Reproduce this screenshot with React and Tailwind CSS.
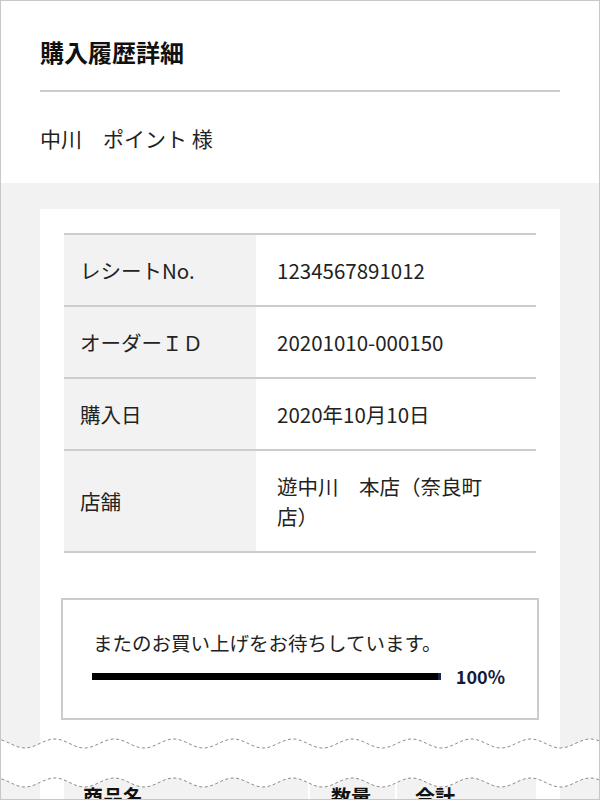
const rows = [
  { label: 'レシートNo.', value: '1234567891012' },
  { label: 'オーダーＩＤ', value: '20201010-000150' },
  { label: '購入日', value: '2020年10月10日' },
  { label: '店舗', value: '遊中川　本店（奈良町店）' },
];

// dashed "torn" band between two sine waves
function wavePoints(y0) {
  const pts = [];
  for (let x = -4; x <= 604; x += 2) {
    const y = y0 + 4.5 * Math.cos((2 * Math.PI * (x - 25)) / 59.5);
    pts.push([x, +y.toFixed(2)]);
  }
  return pts;
}

function FoldBand() {
  const top = wavePoints(13.5);
  const bottom = wavePoints(52.5);
  const line = (pts) => pts.map(([x, y], i) => `${i ? 'L' : 'M'}${x} ${y}`).join(' ');
  const fill =
    line(top) +
    ' ' +
    bottom
      .slice()
      .reverse()
      .map(([x, y]) => `L${x} ${y}`)
      .join(' ') +
    ' Z';
  return (
    <svg
      className="absolute left-0 top-[730px] h-[65px] w-[600px]"
      viewBox="0 0 600 65"
      fill="none"
    >
      <path d={fill} fill="#ffffff" />
      <path d={line(top)} stroke="#8c8c8c" strokeWidth="1" strokeDasharray="3 2.5" />
      <path d={line(bottom)} stroke="#8c8c8c" strokeWidth="1" strokeDasharray="3 2.5" />
    </svg>
  );
}

export default function App() {
  return (
    <div className="relative h-[800px] w-[600px] overflow-hidden bg-[#f2f2f2] font-['Noto_Sans_CJK_JP',sans-serif] text-[#222]">
      <header className="bg-white px-10 pt-[34px] pb-[30px]">
        <h1 className="text-[24px] font-bold leading-[36px] text-[#111]">購入履歴詳細</h1>
        <div className="mt-[20px] h-[2px] bg-[#cccccc]" />
        <p className="mt-[31px] text-[21px] leading-[30px]">中川　ポイント 様</p>
      </header>

      <main className="px-10 pt-[26px]">
        <section className="bg-white px-6 pt-6 pb-10">
          <div className="border-t-2 border-[#cccccc]">
            {rows.map((r) => (
              <div key={r.label} className="grid grid-cols-[192px_1fr] border-b-2 border-[#cccccc]">
                <div className="flex items-center bg-[#f2f2f2] px-4 py-5 text-[20.5px] leading-[30px]">
                  {r.label}
                </div>
                <div className="flex items-center py-5 pl-[21px] text-[20.5px] leading-[30px]">
                  <span className="max-w-[214px]">{r.value}</span>
                </div>
              </div>
            ))}
          </div>

          <div className="-mx-[3px] mt-[45px] border-2 border-[#cccccc] pt-[28px] pr-[32px] pb-[27px] pl-[29px]">
            <p className="pl-[1px] text-[19.5px] leading-[30px]">またのお買い上げをお待ちしています。</p>
            <div className="mt-[3px] flex h-[30px] items-center gap-[15px]">
              <div className="flex h-[7px] flex-1 bg-black">
                <div className="flex-1" />
                <div className="w-[3px] bg-[#1c2452]" />
              </div>
              <span className="text-[18px] font-bold leading-[30px] text-[#161a3a]">100%</span>
            </div>
          </div>

          <div className="mt-[42px] flex gap-[2px] text-[20px] font-bold leading-[30px] text-[#111]">
            <div className="w-[244px] bg-[#f2f2f2] py-5 pl-[19px]">商品名</div>
            <div className="w-[85px] bg-[#f2f2f2] py-5 pl-[21px]">数量</div>
            <div className="flex-1 bg-[#f2f2f2] py-5 pl-[18px]">合計</div>
          </div>
        </section>
      </main>

      <FoldBand />
      <div className="pointer-events-none absolute inset-0 border border-[#c8c8c8]" />
    </div>
  );
}
